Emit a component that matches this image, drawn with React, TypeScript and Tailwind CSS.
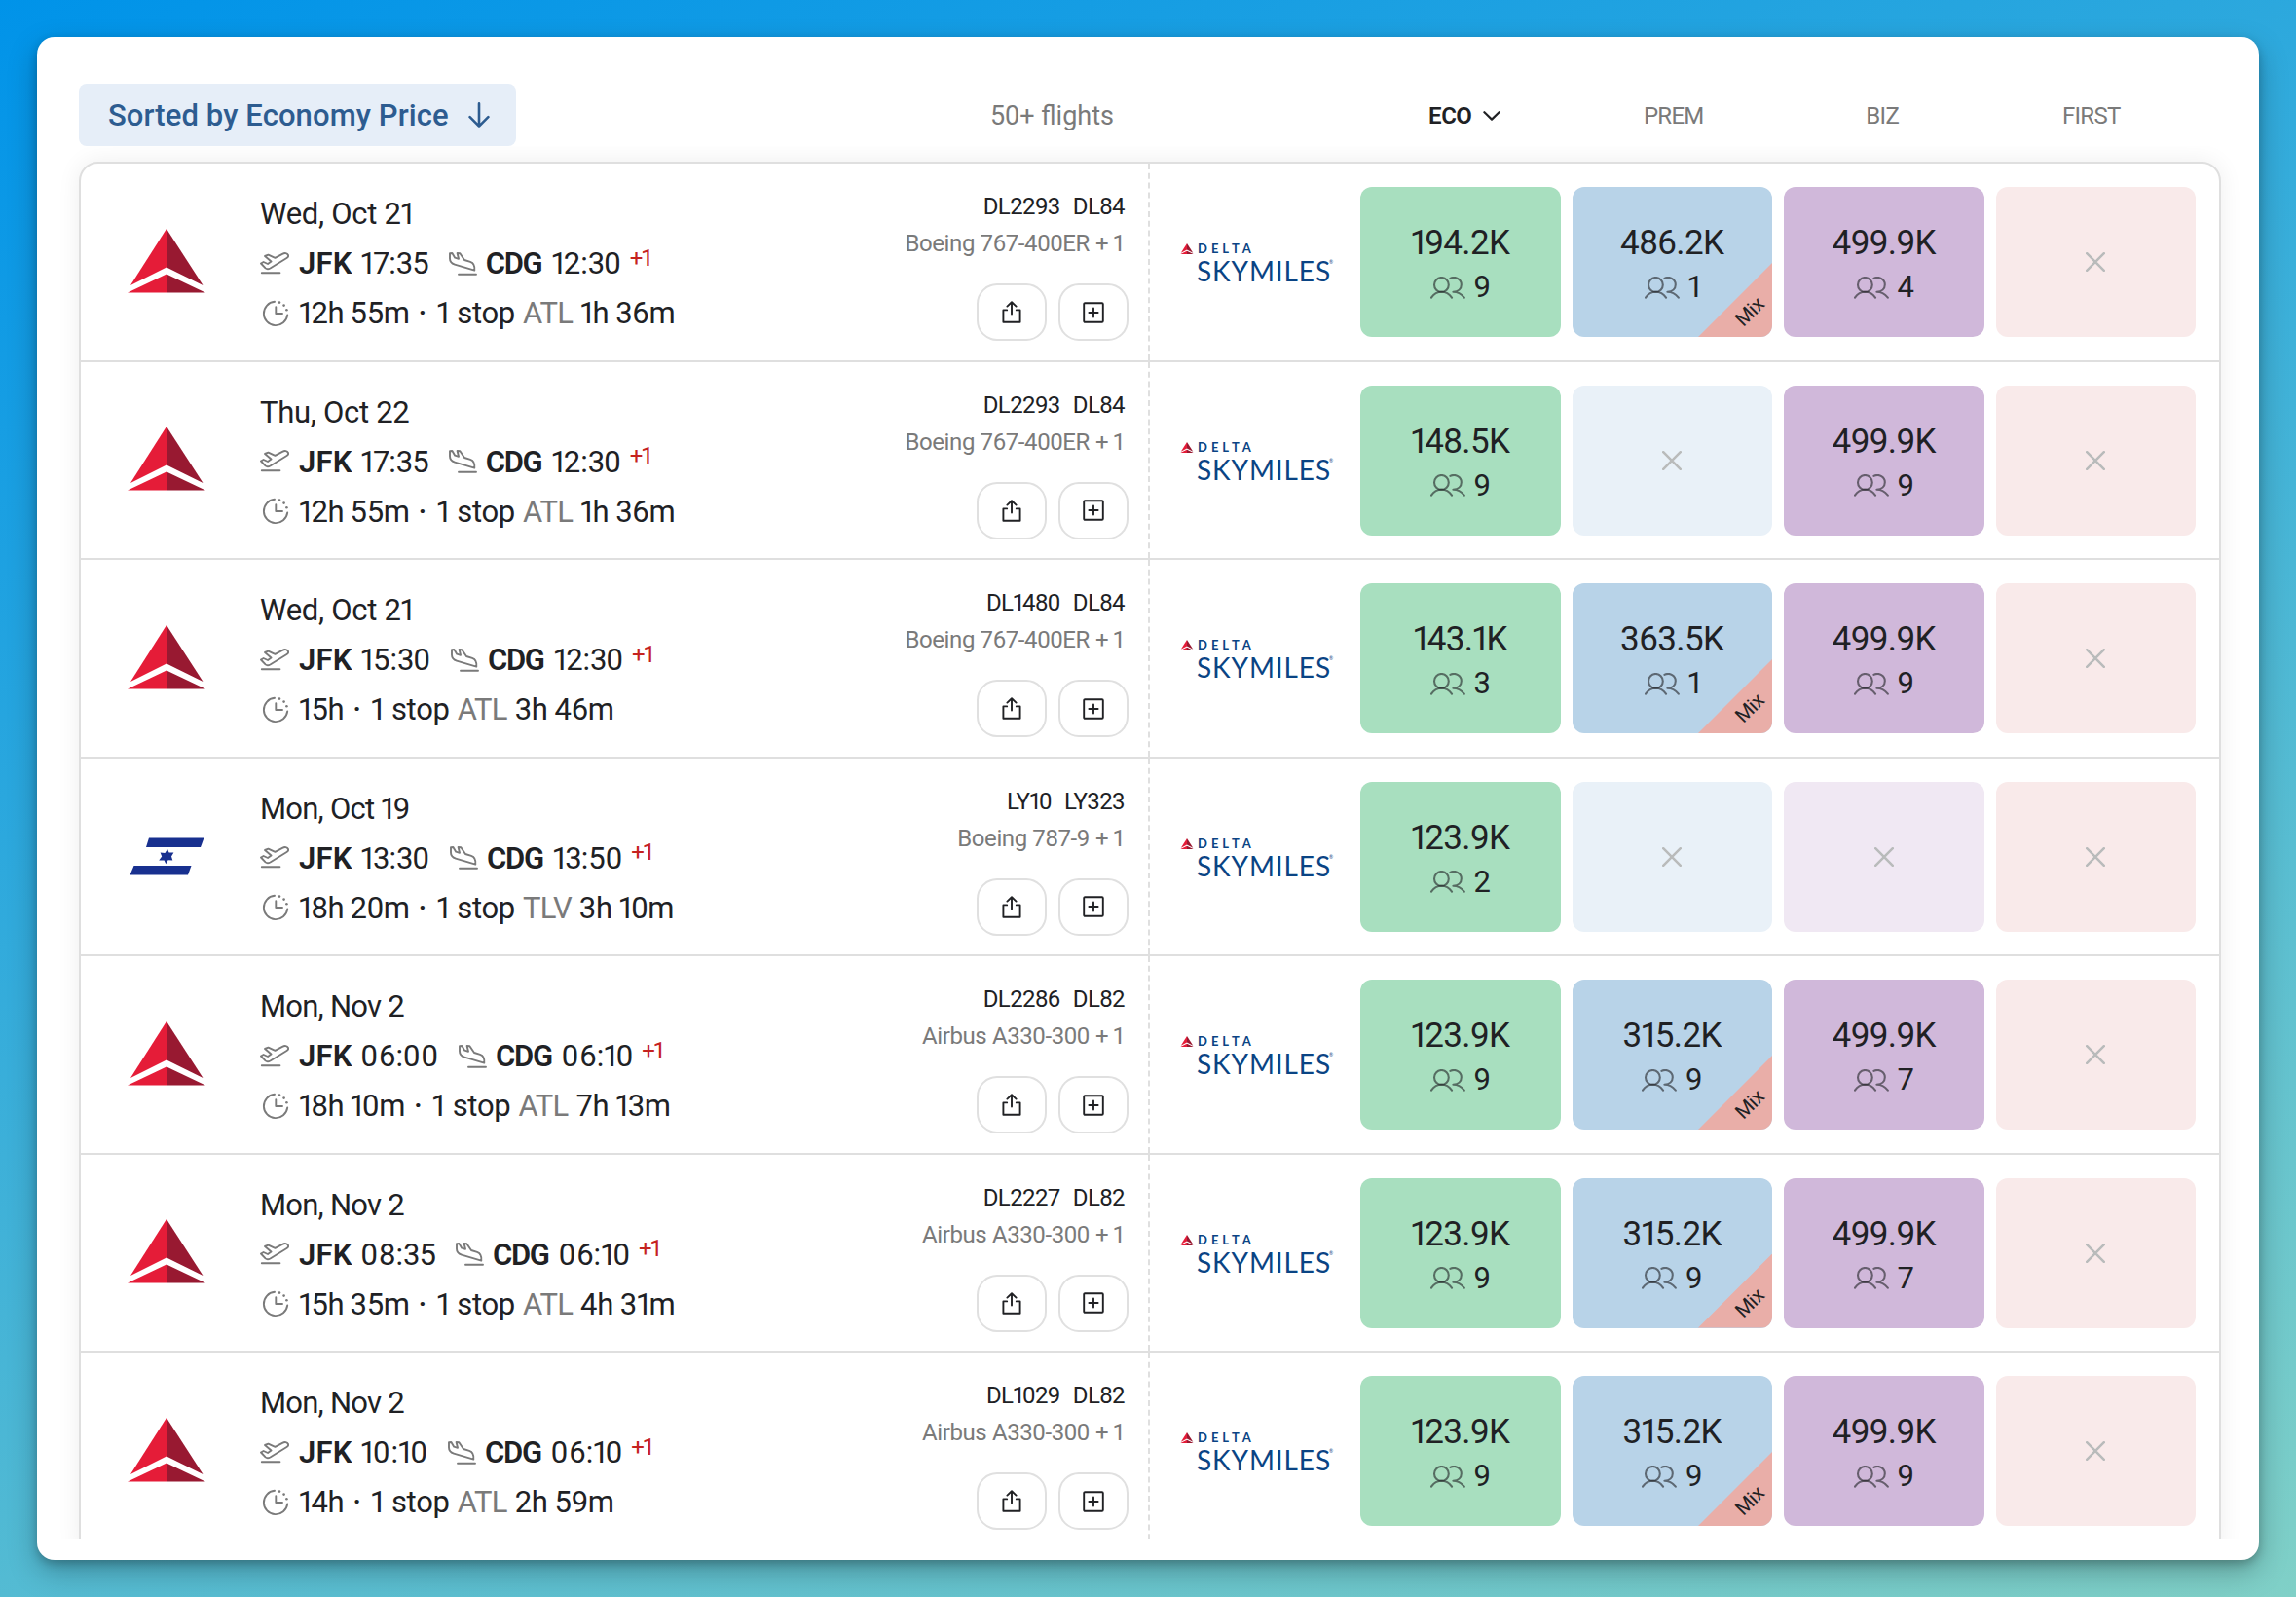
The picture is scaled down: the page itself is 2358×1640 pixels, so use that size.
import React from "react";
import { clsx } from "clsx";

type Cabin = { price: string; seats: number; mix?: boolean } | null;

interface Flight {
  carrier: "delta" | "elal";
  date: string;
  dep: string;
  arr: string;
  duration: string;
  via: string;
  layover: string;
  numbers: [string, string];
  aircraft: string;
  cabins: [Cabin, Cabin, Cabin, Cabin];
}

const flights: Flight[] = [
  {
    carrier: "delta", date: "Wed, Oct 21", dep: "17:35", arr: "12:30", duration: "12h 55m", via: "ATL", layover: "1h 36m",
    numbers: ["DL2293", "DL84"], aircraft: "Boeing 767-400ER",
    cabins: [{ price: "194.2K", seats: 9 }, { price: "486.2K", seats: 1, mix: true }, { price: "499.9K", seats: 4 }, null],
  },
  {
    carrier: "delta", date: "Thu, Oct 22", dep: "17:35", arr: "12:30", duration: "12h 55m", via: "ATL", layover: "1h 36m",
    numbers: ["DL2293", "DL84"], aircraft: "Boeing 767-400ER",
    cabins: [{ price: "148.5K", seats: 9 }, null, { price: "499.9K", seats: 9 }, null],
  },
  {
    carrier: "delta", date: "Wed, Oct 21", dep: "15:30", arr: "12:30", duration: "15h", via: "ATL", layover: "3h 46m",
    numbers: ["DL1480", "DL84"], aircraft: "Boeing 767-400ER",
    cabins: [{ price: "143.1K", seats: 3 }, { price: "363.5K", seats: 1, mix: true }, { price: "499.9K", seats: 9 }, null],
  },
  {
    carrier: "elal", date: "Mon, Oct 19", dep: "13:30", arr: "13:50", duration: "18h 20m", via: "TLV", layover: "3h 10m",
    numbers: ["LY10", "LY323"], aircraft: "Boeing 787-9",
    cabins: [{ price: "123.9K", seats: 2 }, null, null, null],
  },
  {
    carrier: "delta", date: "Mon, Nov 2", dep: "06:00", arr: "06:10", duration: "18h 10m", via: "ATL", layover: "7h 13m",
    numbers: ["DL2286", "DL82"], aircraft: "Airbus A330-300",
    cabins: [{ price: "123.9K", seats: 9 }, { price: "315.2K", seats: 9, mix: true }, { price: "499.9K", seats: 7 }, null],
  },
  {
    carrier: "delta", date: "Mon, Nov 2", dep: "08:35", arr: "06:10", duration: "15h 35m", via: "ATL", layover: "4h 31m",
    numbers: ["DL2227", "DL82"], aircraft: "Airbus A330-300",
    cabins: [{ price: "123.9K", seats: 9 }, { price: "315.2K", seats: 9, mix: true }, { price: "499.9K", seats: 7 }, null],
  },
  {
    carrier: "delta", date: "Mon, Nov 2", dep: "10:10", arr: "06:10", duration: "14h", via: "ATL", layover: "2h 59m",
    numbers: ["DL1029", "DL82"], aircraft: "Airbus A330-300",
    cabins: [{ price: "123.9K", seats: 9 }, { price: "315.2K", seats: 9, mix: true }, { price: "499.9K", seats: 9 }, null],
  },
];

const figureSpacing: Record<string, string> = {
  "0": "tracking-[0.035em]",
  "1": "-ml-[0.04em] tracking-[-0.12em]",
  "3": "tracking-[-0.03em]",
  "7": "tracking-[-0.04em]",
};

/** Clock time set with proportional instead of tabular figures. */
function Time({ children }: { children: string }) {
  return (
    <>
      {children.split(/([0137])/).filter(Boolean).map((part, i) =>
        figureSpacing[part] ? <span key={i} className={figureSpacing[part]}>{part}</span> : part
      )}
    </>
  );
}

/** Text whose figure "1" is set tighter than the tabular default. */
function Fig({ children }: { children: string }) {
  return (
    <>
      {children.split(/(1)/).filter(Boolean).map((part, i) =>
        part === "1" ? <span key={i} className={figureSpacing["1"]}>1</span> : part
      )}
    </>
  );
}

function DeltaMark({ className }: { className: string }) {
  return (
    <svg viewBox="0 0 80 66" className={className}>
      <path d="M40 0L3 58L40 39.5Z" fill="#e51c38" />
      <path d="M40 0L77.5 58L40 39.5Z" fill="#981931" />
      <path d="M40 46.5L0 65.5H40Z" fill="#e51c38" />
      <path d="M40 46.5L80 65.5H40Z" fill="#981931" />
    </svg>
  );
}

function ElAlMark() {
  return (
    <svg viewBox="0 0 80 66" className="h-[66px] w-20 shrink-0" fill="#18308f">
      <path d="M22 15.5H78.5L75 25H19Z" />
      <path d="M6.5 44H65.5L62 53.5H2.5Z" />
      <path d="M41 27L42.6 30.6H47.4L45 34.4L46.3 38.6L41.6 38.2L39.3 42.2L37.6 38.4H32.2L35.2 34.6L33.6 30.4L38.4 31Z" />
    </svg>
  );
}

const line = { fill: "none", stroke: "currentColor", strokeLinecap: "round", strokeLinejoin: "round" } as const;

function TakeoffIcon() {
  return (
    <svg viewBox="0 0 30 24" className="h-6 w-[30px] shrink-0 text-[#7a7a7a]" strokeWidth={1.9} {...line}>
      <path d="M1 11.5L3.6 10L8 12L11.5 9.5L5 4L8.5 2.6L15.5 5.8L23 1.8C25.5 .5 28 .8 29 3C29.4 4.2 28.8 5.2 27.5 6L10.5 16.5C8.5 17.6 7 17.6 5.6 16.4Z" />
      <path d="M1.8 21.2H20.4" />
    </svg>
  );
}

function LandingIcon() {
  return (
    <svg viewBox="0 0 30 24" className="h-6 w-[30px] shrink-0 text-[#7a7a7a]" strokeWidth={1.9} {...line}>
      <path d="M1 1.2L3.4 1L6.2 5.7L10 6.8L8.6 1L11.4 1.3L16 8L22 9.8C25.5 11 26.8 14 26.3 18.6L6 12.6C2.5 11.5 1 10 1 6.5Z" />
      <path d="M10 22.7H28" />
    </svg>
  );
}

function ClockIcon() {
  return (
    <svg viewBox="0 0 28 28" className="ml-[2px] h-7 w-7 shrink-0 text-[#7a7a7a]" strokeWidth={1.9} {...line}>
      <path d="M13 1.8A12.2 12.2 0 1 0 26.2 15.4" />
      <path d="M14.3 7.2V14H21" />
      <g fill="currentColor" stroke="none">
        <circle cx="18" cy="2.6" r="1.3" />
        <circle cx="22.6" cy="5.6" r="1.3" />
        <circle cx="25.4" cy="10.2" r="1.3" />
      </g>
    </svg>
  );
}

function PeopleIcon() {
  return (
    <svg viewBox="0 0 36 23" className="h-[23px] w-9 shrink-0 text-[#202124]/60" strokeWidth={2.1} {...line}>
      <circle cx="11.4" cy="8.4" r="7.4" />
      <path d="M1 21.6C6.5 13.8 16.5 13.8 22 21.6" />
      <path d="M20.4 1.9C26 -.8 31.8 3 31.8 8.2C31.8 12.6 28.5 15.6 23.4 15.8C28 15.8 31.6 17.8 34.8 21.6" />
    </svg>
  );
}

function ShareIcon() {
  return (
    <svg viewBox="0 0 20 23" className="h-[23px] w-5 text-[#202124]" strokeWidth={1.9} {...line}>
      <path d="M5.2 9.4H1.4V21.8H18.6V9.4H14.8" />
      <path d="M10 13.6V1.4M5.4 5.6L10 1.2L14.6 5.6" />
    </svg>
  );
}

function PlusSquareIcon() {
  return (
    <svg viewBox="0 0 22 22" className="size-[22px] text-[#202124]" strokeWidth={1.9} {...line}>
      <rect x="1.2" y="1.2" width="19.6" height="19.6" rx="1" />
      <path d="M11 6.4V15.6M6.4 11H15.6" />
    </svg>
  );
}

function SkymilesLogo() {
  return (
    <div className="flex w-[216px] shrink-0 flex-col pt-[80px] pl-[31px] text-[#0a4484]">
      <div className="flex h-[15px] items-center">
        <DeltaMark className="h-[11px] w-[14px]" />
        <span className="ml-[4px] font-['Lato'] text-[13px] leading-[15px] font-bold tracking-[4px]">DELTA</span>
      </div>
      <div className="-mt-[3px] flex pl-[17px] font-['Lato'] text-[28px] leading-[36px] tracking-[0.9px]">
        SKYMILES<span className="-ml-[2px] text-[5px] leading-[18px] tracking-normal">®</span>
      </div>
    </div>
  );
}

const tones = [
  { on: "bg-[#a8dfbf]", off: "bg-[#e6f6ec]" },
  { on: "bg-[#b8d3e8]", off: "bg-[#e9f1f8]" },
  { on: "bg-[#d0b8da]", off: "bg-[#f0e8f3]" },
  { on: "bg-[#e9aea8]", off: "bg-[#f9eaea]" },
];

function CabinCell({ cabin, tone }: { cabin: Cabin; tone: number }) {
  return (
    <div
      className={clsx(
        "relative flex h-[154px] flex-1 flex-col items-center overflow-hidden rounded-xl",
        cabin ? tones[tone].on : tones[tone].off,
        !cabin && "justify-center"
      )}
    >
      {cabin ? (
        <>
          <div className="mt-[36px] text-[35px] leading-[44px] tracking-[-0.6px]">
            <Fig>{cabin.price}</Fig>
          </div>
          <div className="mt-px flex h-[44px] items-center">
            <PeopleIcon />
            <span className="ml-[9px] text-[31px] leading-[44px]">
              <Fig>{String(cabin.seats)}</Fig>
            </span>
          </div>
          {cabin.mix && (
            <div className="absolute right-0 bottom-0 size-[76px] bg-[#e9aea8] [clip-path:polygon(100%_0,100%_100%,0_100%)]">
              <span className="absolute top-[37px] left-[34px] w-[38px] -rotate-45 text-center text-[20.5px] leading-[26px] tracking-[-0.3px]">Mix</span>
            </div>
          )}
        </>
      ) : (
        <svg viewBox="0 0 20 20" className="size-5 text-[#b9bbbb]" strokeWidth={2.5} {...line}>
          <path d="M1.2 1.2L18.8 18.8M18.8 1.2L1.2 18.8" />
        </svg>
      )}
    </div>
  );
}

function ActionButton({ children }: { children: React.ReactNode }) {
  return (
    <button className="flex h-[59px] w-[72px] items-center justify-center rounded-[21px] border-2 border-[#e0e0e0] bg-white">
      {children}
    </button>
  );
}

function FlightRow({ flight }: { flight: Flight }) {
  return (
    <div className="flex h-[203.5px] shrink-0 border-b-2 border-[#dfdfdf]">
      <div className="flex w-[1098px] shrink-0 border-r-2 border-dashed border-[#dfdfdf] pr-[20px] pl-12">
        <div className="flex items-center pb-[2px]">
          {flight.carrier === "delta" ? <DeltaMark className="h-[66px] w-20 shrink-0" /> : <ElAlMark />}
        </div>
        <div className="ml-[56px] flex flex-col pt-[26px] text-[31px] leading-[51px] whitespace-nowrap">
          <div className={flight.date.startsWith("Mon") ? "tracking-[-0.75px]" : "tracking-[-0.3px]"}>
            <Fig>{flight.date}</Fig>
          </div>
          <div className="flex items-center">
            <TakeoffIcon />
            <span className="ml-[10px] font-semibold tracking-[0.2px]">JFK</span>
            <span className="ml-[9px]"><Time>{flight.dep}</Time></span>
            <span className="ml-[20px] flex"><LandingIcon /></span>
            <span className="ml-[8px] font-semibold tracking-[-1.3px]">CDG</span>
            <span className="ml-[10px]"><Time>{flight.arr}</Time></span>
            <span className="-mt-[11px] ml-[8px] text-[24px] tracking-[-2.4px] text-[#c5221f]">+1</span>
          </div>
          <div className="flex items-center">
            <ClockIcon />
            <span className="ml-[10px] tracking-[-0.35px] [word-spacing:-1px]"><Fig>{flight.duration}</Fig></span>
            <span className="mr-[10px] ml-[9px] font-medium">·</span>
            <span className="tracking-[-0.3px] [word-spacing:1px]"><Fig>1 stop</Fig></span>
            <span className="ml-[8px] tracking-[-0.8px] text-[#7a7a7a]">{flight.via}</span>
            <span className="ml-[8px] tracking-[-0.3px] [word-spacing:-0.5px]"><Fig>{flight.layover}</Fig></span>
          </div>
        </div>
        <div className="ml-auto flex flex-col items-end pt-[25px]">
          <div className="flex gap-[13px] pr-[4px] text-[24px] leading-[38px] tracking-[-0.6px]">
            {flight.numbers.map((n) => (
              <span key={n}><Fig>{n}</Fig></span>
            ))}
          </div>
          <div className="flex gap-[6px] pr-[4px] text-[24px] leading-[38px] text-[#7a7a7a]">
            <span className="tracking-[-0.4px]">{flight.aircraft}</span>
            <span className="tracking-[-1px]">+ 1</span>
          </div>
          <div className="mt-[22px] flex gap-3">
            <ActionButton><ShareIcon /></ActionButton>
            <ActionButton><PlusSquareIcon /></ActionButton>
          </div>
        </div>
      </div>
      <SkymilesLogo />
      <div className="flex flex-1 gap-3 pt-6 pr-6">
        {flight.cabins.map((cabin, i) => (
          <CabinCell key={i} cabin={cabin} tone={i} />
        ))}
      </div>
    </div>
  );
}

export default function App() {
  return (
    <div className="h-[1640px] w-[2358px] bg-[linear-gradient(160deg,#0093e9_0%,#80d0c7_100%)] p-[38px] font-['Roboto','Liberation_Sans',sans-serif] text-[#202124]">
      <div className="flex h-[1564px] w-[2282px] flex-col rounded-[18px] bg-white pt-12 pr-[18px] pb-[22px] pl-[22px] shadow-[0_4px_10px_rgba(0,0,0,0.22),0_12px_30px_rgba(0,0,0,0.25)]">
        <header className="flex h-16 shrink-0 items-center pl-[21px]">
          <button className="flex h-16 w-[449px] items-center rounded-lg bg-[#e6eef8] pl-[30px] text-[31px] font-medium text-[#2d5c90]">
            <span className="pt-[2px] tracking-[0.1px] whitespace-nowrap">Sorted by Economy Price</span>
            <svg viewBox="0 0 22 26" className="mr-[27px] ml-auto h-[26px] w-[22px]" strokeWidth={2.6} {...line}>
              <path d="M11 1.4V24.4M1.6 15.2L11 24.6L20.4 15.2" />
            </svg>
          </button>
          <span className="ml-auto pt-[3px] text-[27px] text-[#7a7a7a]">50+ flights</span>
          <div className="mr-[47px] ml-[253px] grid w-[858px] grid-cols-4 pt-[2px] text-center text-[24px] tracking-[-0.7px] text-[#7a7a7a]">
            <span className="flex items-center justify-center gap-3 font-semibold tracking-[-0.5px] text-[#202124]">
              ECO
              <svg viewBox="0 0 18 10" className="h-[10px] w-[18px]" strokeWidth={2.2} {...line}>
                <path d="M1.4 1.2L9 8.6L16.6 1.2" />
              </svg>
            </span>
            <span>PREM</span>
            <span>BIZ</span>
            <span>FIRST</span>
          </div>
        </header>
        <div className="min-h-0 flex-1 overflow-hidden px-[21px] pt-4">
          <div className="flex flex-col rounded-t-[20px] border-2 border-[#dfdfdf] bg-white shadow-[0_0_24px_rgba(0,0,0,0.07)]">
            {flights.map((f, i) => (
              <FlightRow key={i} flight={f} />
            ))}
          </div>
        </div>
      </div>
    </div>
  );
}
